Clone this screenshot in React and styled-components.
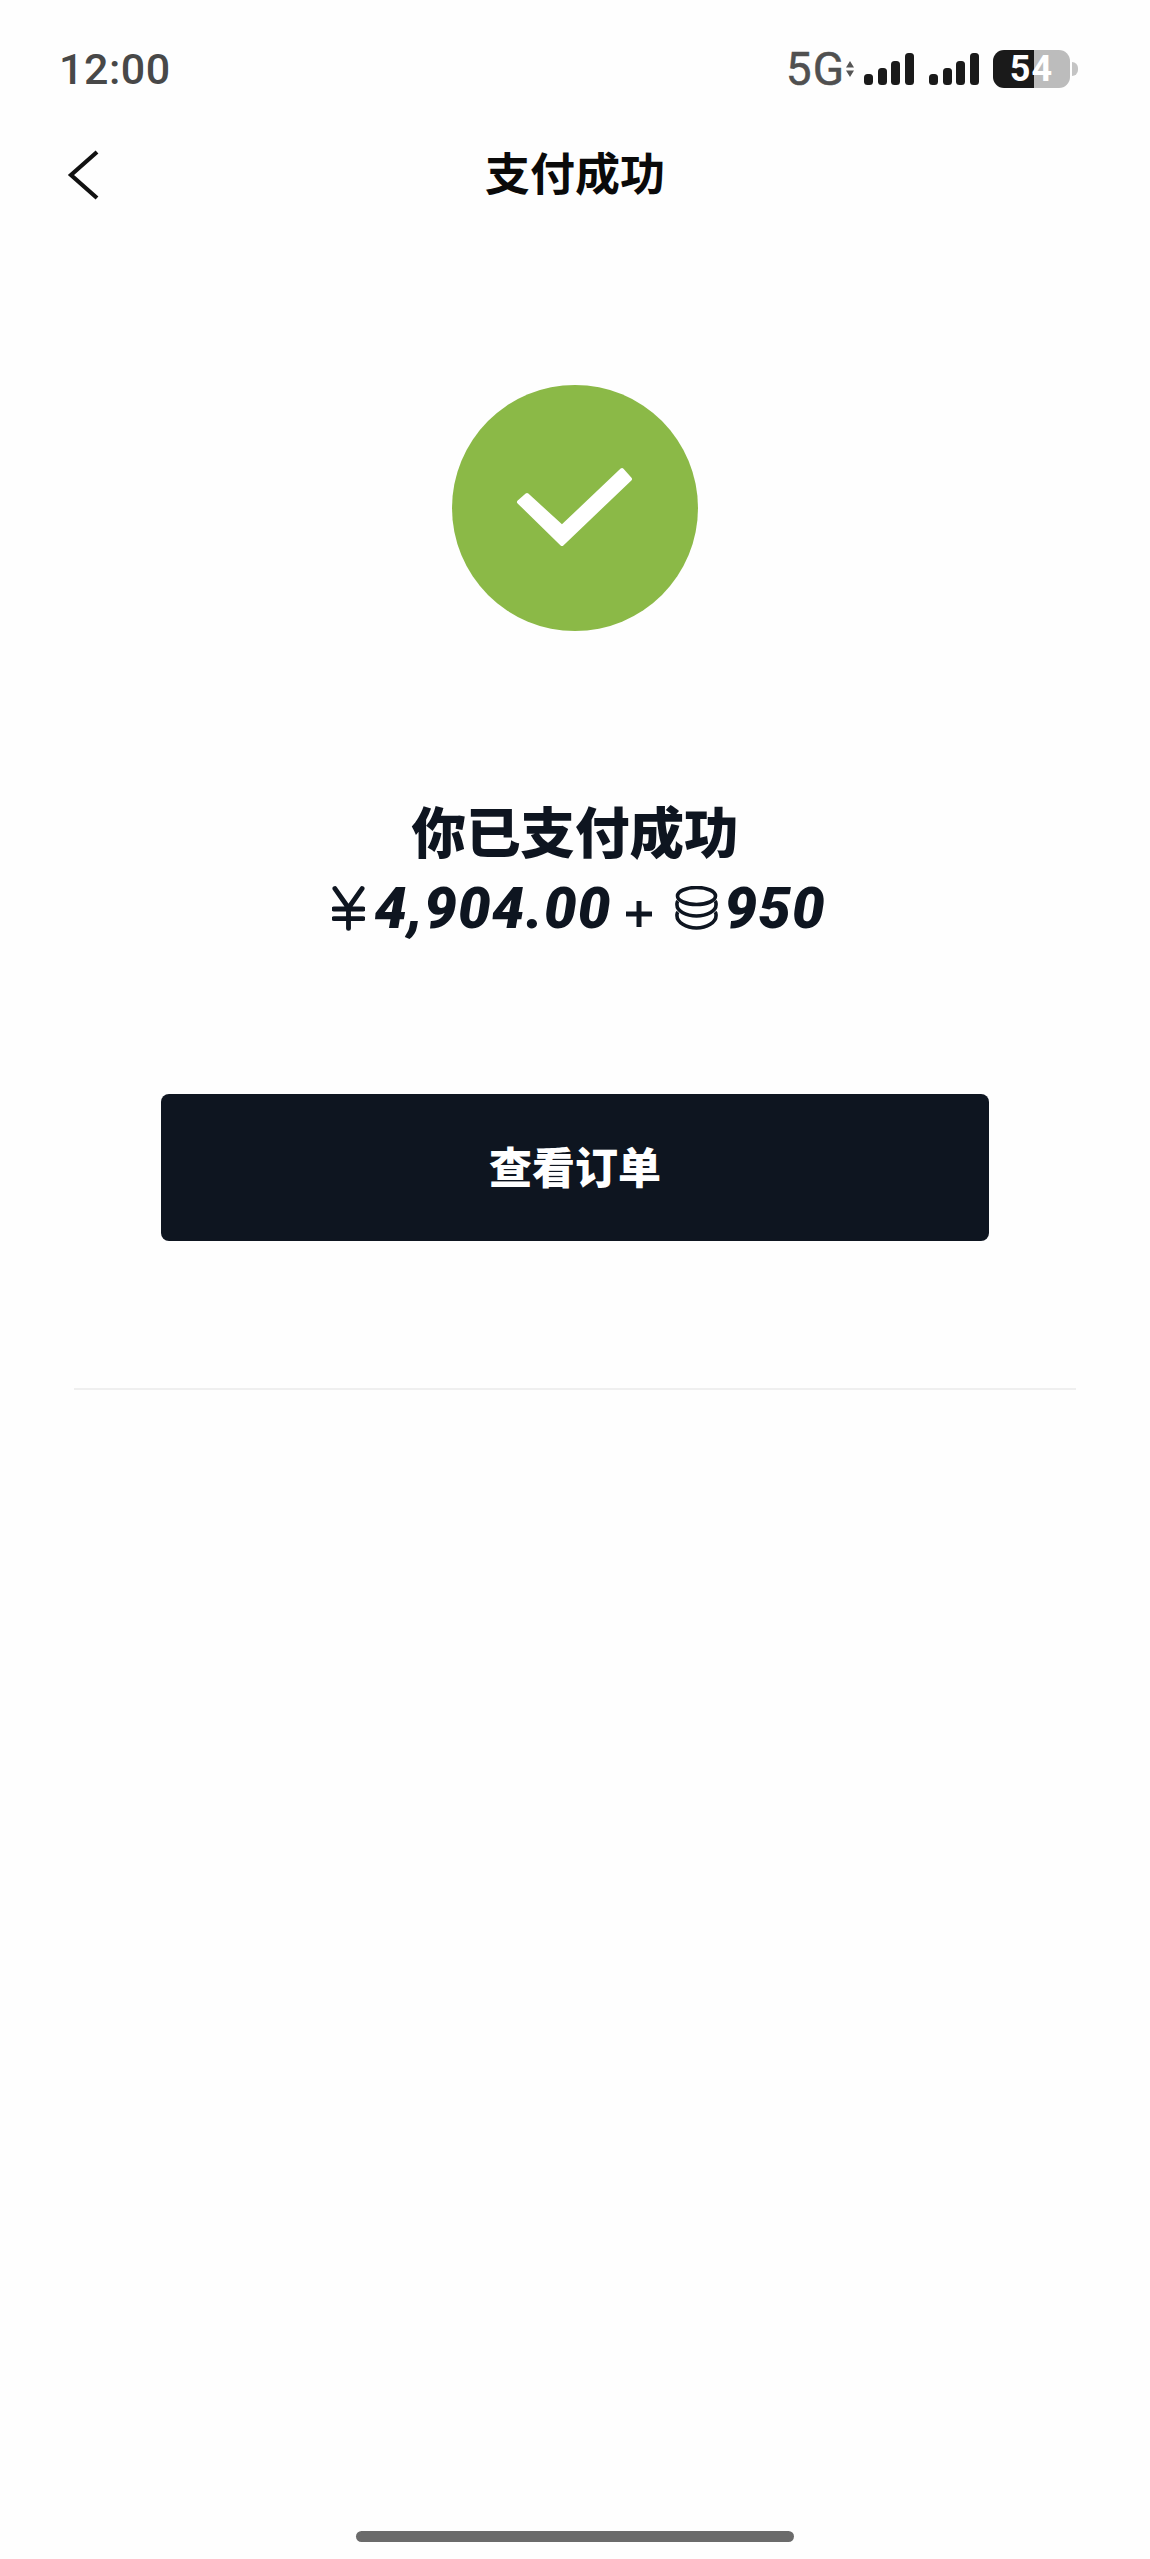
import styled, { createGlobalStyle } from 'styled-components'

const GlobalStyle = createGlobalStyle`
  html, body {
    margin: 0;
    padding: 0;
    background: #fefefe;
  }
  * {
    box-sizing: border-box;
  }
`

const Page = styled.div`
  width: 1150px;
  height: 2559px;
  display: flex;
  flex-direction: column;
  align-items: center;
  background: #fefefe;
  color: #0e1520;
  font-family: 'Noto Sans CJK SC', 'Noto Sans', sans-serif;
  overflow: hidden;
`

const StatusBar = styled.div`
  width: 100%;
  height: 68px;
  margin-top: 35px;
  padding: 0 72px 0 59px;
  display: flex;
  align-items: center;
  justify-content: space-between;
  font-family: Roboto, sans-serif;
`

const Clock = styled.span`
  font-size: 43px;
  font-weight: 500;
  letter-spacing: 0.5px;
  color: #484848;
`

const StatusIcons = styled.div`
  display: flex;
  align-items: center;
`

const Network = styled.span`
  font-size: 46px;
  font-weight: 400;
  letter-spacing: 1px;
  -webkit-text-stroke: 0.5px #505050;
  color: #505050;
  line-height: 1;
`

const Battery = styled.div`
  width: 77px;
  height: 38px;
  margin-left: 14px;
  display: flex;
  align-items: center;
  justify-content: center;
  border-radius: 11px;
  background: linear-gradient(90deg, #1a1a1a 0 53.5%, #bcbcbc 53.5% 100%);
  color: #fff;
  font-size: 36px;
  font-weight: 700;
  letter-spacing: 1px;
  line-height: 1;
`

const BatteryNub = styled.div`
  width: 6px;
  height: 14px;
  margin-left: 2px;
  border-radius: 0 6px 6px 0;
  background: #c4c4c4;
`

const NavBar = styled.div`
  width: 100%;
  height: 140px;
  display: grid;
  grid-template-columns: 1fr auto 1fr;
  align-items: center;
`

const BackIcon = styled.svg`
  width: 34px;
  height: 52px;
  margin: 3px 0 0 66px;
  display: block;
`

const NavTitle = styled.h1`
  margin: 0;
  padding-bottom: 4px;
  font-size: 45px;
  font-weight: 700;
  line-height: 1;
  color: #0a0a0a;
`

const CheckCircle = styled.div`
  width: 246px;
  height: 246px;
  margin-top: 142px;
  border-radius: 50%;
  background: #8bb947;
  display: flex;
  align-items: center;
  justify-content: center;
`

const CheckIcon = styled.svg`
  width: 246px;
  height: 246px;
  display: block;
`

const Heading = styled.h2`
  margin: 164px 0 0;
  font-size: 54.5px;
  font-weight: 900;
  line-height: 70px;
`

const Amount = styled.div`
  margin-top: 12px;
  padding-left: 8px;
  height: 62px;
  display: flex;
  align-items: center;
  font-family: Roboto, sans-serif;
  font-size: 58px;
  font-weight: 900;
  font-style: italic;
  letter-spacing: 1.2px;
`

const YenIcon = styled.svg`
  width: 33px;
  height: 46px;
  margin-right: 9px;
  display: block;
`

const Plus = styled.svg`
  width: 26px;
  height: 26px;
  margin: 12px 23px 0 15px;
  display: block;
`

const CoinIcon = styled.svg`
  width: 43px;
  height: 44px;
  margin-right: 6px;
  display: block;
`

const OrderButton = styled.button`
  width: 828px;
  height: 147px;
  margin-top: 155px;
  padding: 0 0 5px;
  border: 0;
  border-radius: 8px;
  background: #0e1520;
  color: #fff;
  font-family: inherit;
  font-size: 43px;
  font-weight: 900;
`

const Divider = styled.div`
  width: 1002px;
  height: 2px;
  margin-top: 147px;
  background: #efefef;
`

const HomeBar = styled.div`
  width: 438px;
  height: 11px;
  margin: auto 0 17px;
  border-radius: 6px;
  background: #6b6b6b;
`

const signalBars = [
  { x: 0, h: 11 },
  { x: 14, h: 17 },
  { x: 27, h: 24 },
  { x: 41, h: 32 },
]

const Signal = ({ className }) => (
  <svg className={className} width="50" height="32" viewBox="0 0 50 32">
    {signalBars.map((b) => (
      <rect key={b.x} x={b.x} y={32 - b.h} width="9" height={b.h} rx="3.5" fill="#1a1a1a" />
    ))}
  </svg>
)

const SignalGap = styled(Signal)`
  margin-left: 15px;
  display: block;
`

const TrafficArrows = styled.svg`
  width: 8px;
  height: 16px;
  margin: 0 10px 0 1px;
  display: block;
`

const App = () => {
  return (
    <Page>
      <GlobalStyle />
      <StatusBar>
        <Clock>12:00</Clock>
        <StatusIcons>
          <Network>5G</Network>
          <TrafficArrows viewBox="0 0 8 16">
            <path d="M4 0 8 6.5H0ZM4 16 0 9.500H8Z" fill="#555" />
          </TrafficArrows>
          <Signal />
          <SignalGap />
          <Battery>54</Battery>
          <BatteryNub />
        </StatusIcons>
      </StatusBar>

      <NavBar>
        <BackIcon viewBox="0 0 34 52">
          <path d="M31 3 5 26l26 23" fill="none" stroke="#111" strokeWidth="4.2" />
        </BackIcon>
        <NavTitle>支付成功</NavTitle>
      </NavBar>

      <CheckCircle>
        <CheckIcon viewBox="0 0 246 246">
          <path
            d="M75 110 67 117 110 159 178 94 170 85 110 142Z"
            fill="#fff"
            stroke="#fff"
            strokeWidth="4"
            strokeLinejoin="round"
          />
        </CheckIcon>
      </CheckCircle>

      <Heading>你已支付成功</Heading>
      <Amount>
        <YenIcon viewBox="0 0 34 46">
          <path
            d="M3 3l14 20L31 3M17 23v21M2 24h30M2 34h30"
            fill="none"
            stroke="#0e1520"
            strokeWidth="5"
            strokeLinecap="round"
          />
        </YenIcon>
        4,904.00
        <Plus viewBox="0 0 26 26">
          <path d="M13 0v26M0 13h26" stroke="#0e1520" strokeWidth="5" />
        </Plus>
        <CoinIcon viewBox="0 0 43 44">
          <g fill="none" stroke="#0e1520" strokeWidth="3.600">
            <ellipse cx="21.500" cy="10" rx="19" ry="8.500" />
            <path d="M3 15c-1.500 1.500-1 3-1 4 0 6 9 11 19.500 11S41 25 41 19c0-1 .5-2.500-1-4" />
            <path d="M3 26c-1.500 1.500-1 3-1 4 0 6 9 12 19.500 12S41 36 41 30c0-1 .5-2.500-1-4" />
          </g>
        </CoinIcon>
        950
      </Amount>

      <OrderButton>查看订单</OrderButton>
      <Divider />
      <HomeBar />
    </Page>
  )
}

export default App
